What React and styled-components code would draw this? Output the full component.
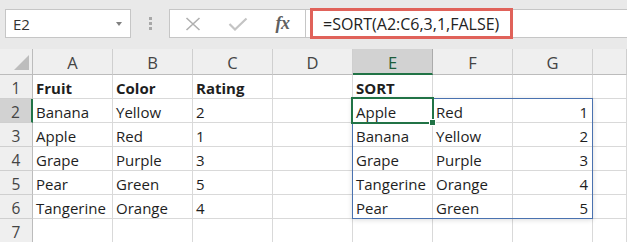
import React from 'react';
import styled, { createGlobalStyle } from 'styled-components';

const GlobalStyle = createGlobalStyle`
  html, body {
    margin: 0;
    padding: 0;
    background: #fff;
  }
  body {
    font-family: "Open Sans", "Liberation Sans", sans-serif;
    overflow: hidden;
  }
`;

const Window = styled.div`
  width: 627px;
  height: 242px;
  overflow: hidden;
  background: #fff;
`;

const FormulaBar = styled.div`
  display: flex;
  align-items: flex-start;
  height: 49px;
  box-sizing: border-box;
  padding-top: 9px;
  background: #e9e9e9;
`;

const NameBox = styled.div`
  width: 126px;
  height: 29px;
  margin-left: 5px;
  box-sizing: border-box;
  border: 1px solid #c6c6c6;
  background: #fff;
  display: flex;
  align-items: center;
  justify-content: space-between;
  padding: 0 8px 0 7px;
  font-size: 15px;
  color: #333;
`;

const Caret = styled.span`
  width: 0;
  height: 0;
  border-left: 3.5px solid transparent;
  border-right: 3.5px solid transparent;
  border-top: 4px solid #808080;
`;

const Grip = styled.div`
  width: 38px;
  height: 29px;
  display: flex;
  flex-direction: column;
  align-items: center;
  justify-content: center;
  gap: 2px;

  span {
    width: 3px;
    height: 3px;
    background: #a8a8a8;
  }
`;

const FxBox = styled.div`
  width: 137px;
  height: 29px;
  box-sizing: border-box;
  border: 1px solid #c6c6c6;
  background: #fff;
  display: flex;
  align-items: center;
`;

const IconSlot = styled.div`
  width: 45px;
  display: flex;
  justify-content: center;
  align-items: center;
  color: ${p => p.$color || '#b0b0b0'};
`;

const FxLabel = styled.span`
  font-family: "Liberation Serif", "DejaVu Serif", serif;
  font-style: italic;
  font-weight: bold;
  font-size: 18px;
  color: #606060;
  letter-spacing: -0.5px;
`;

const FormulaInput = styled.div`
  flex: 1;
  height: 29px;
  box-sizing: border-box;
  border-top: 1px solid #c6c6c6;
  border-bottom: 1px solid #c6c6c6;
  background: #fff;
  display: flex;
  align-items: center;
`;

const Highlight = styled.div`
  flex-shrink: 0;
  width: 203px;
  height: 31px;
  margin-left: 4px;
  box-sizing: border-box;
  border: 3px solid #e0625a;
  padding-left: 10px;
  display: flex;
  align-items: center;
  font-size: 16px;
  color: #222;
`;

const Grid = styled.div`
  display: grid;
  grid-template-columns: 33px repeat(7, 80px) 1fr;
  grid-template-rows: 26px repeat(7, 24px);
`;

const Placed = styled.div`
  grid-row: ${p => p.$r};
  grid-column: ${p => p.$c};
  box-sizing: border-box;
  min-width: 0;
`;

const Corner = styled(Placed)`
  background: #efefef;
  border-right: 1px solid #bcbcbc;
  border-bottom: 1px solid #bcbcbc;
  display: flex;
  justify-content: flex-end;
  align-items: flex-end;
  padding: 0 3px 4px 0;

  &::after {
    content: '';
    width: 0;
    height: 0;
    border-left: 15px solid transparent;
    border-bottom: 15px solid #bdbdbd;
  }
`;

const ColHead = styled(Placed)`
  background: ${p => (p.$sel ? '#d2d2d2' : '#efefef')};
  border-right: 1px solid ${p => (p.$sel ? '#ababab' : '#cfcfcf')};
  border-bottom: ${p => (p.$sel ? '2px solid #217346' : '1px solid #bcbcbc')};
  color: ${p => (p.$sel ? '#1d5c3a' : '#444')};
  display: flex;
  justify-content: center;
  align-items: flex-end;
  padding-bottom: ${p => (p.$sel ? 0 : 1)}px;
  font-size: 16.5px;
  line-height: 20px;
`;

const RowHead = styled(Placed)`
  background: ${p => (p.$sel ? '#d2d2d2' : '#efefef')};
  border-right: ${p => (p.$sel ? '2px solid #217346' : '1px solid #bcbcbc')};
  border-bottom: 1px solid #cfcfcf;
  color: #444;
  display: flex;
  justify-content: center;
  align-items: flex-end;
  padding-bottom: 1px;
  font-size: 15.5px;
  line-height: 18px;
`;

const Cell = styled(Placed)`
  border-right: 1px solid #d9d9d9;
  border-bottom: 1px solid #d9d9d9;
  display: flex;
  align-items: flex-end;
  justify-content: ${p => (p.$right ? 'flex-end' : 'flex-start')};
  padding: 0 4px 1px 3px;
  font-size: 15px;
  line-height: 18px;
  font-weight: ${p => (p.$bold ? 700 : 400)};
  color: #1e1e1e;
  white-space: nowrap;
`;

const SpillRange = styled(Placed)`
  position: relative;
  z-index: 1;
  margin: -1px 0 0 -1px;
  border: 1px solid #4a72b0;
  box-shadow: 0 1px 5px rgba(0, 0, 0, 0.14);
  pointer-events: none;
`;

const ActiveCell = styled(Placed)`
  position: relative;
  z-index: 2;
  margin: -2px -1px -1px -2px;
  border: 2px solid #217346;
  pointer-events: none;

  &::after {
    content: '';
    position: absolute;
    right: -4px;
    bottom: -4px;
    width: 5px;
    height: 5px;
    background: #217346;
    border: 1px solid #fff;
  }
`;

const columns = ['A', 'B', 'C', 'D', 'E', 'F', 'G', ''];

const rows = [
  ['Fruit', 'Color', 'Rating', '', 'SORT', '', ''],
  ['Banana', 'Yellow', '2', '', 'Apple', 'Red', 1],
  ['Apple', 'Red', '1', '', 'Banana', 'Yellow', 2],
  ['Grape', 'Purple', '3', '', 'Grape', 'Purple', 3],
  ['Pear', 'Green', '5', '', 'Tangerine', 'Orange', 4],
  ['Tangerine', 'Orange', '4', '', 'Pear', 'Green', 5],
  ['', '', '', '', '', '', ''],
];

const CancelIcon = () => (
  <svg width="16" height="14" viewBox="0 0 16 14">
    <path d="M1.5 1 L14.5 13 M14.5 1 L1.5 13" stroke="currentColor" strokeWidth="1.6" fill="none" />
  </svg>
);

const CheckIcon = () => (
  <svg width="20" height="14" viewBox="0 0 20 14">
    <path d="M1.5 7 L7 12.5 L18.5 1.5" stroke="currentColor" strokeWidth="2.2" fill="none" />
  </svg>
);

export default function App() {
  return (
    <Window>
      <GlobalStyle />
      <FormulaBar>
        <NameBox>
          <span>E2</span>
          <Caret />
        </NameBox>
        <Grip>
          <span />
          <span />
          <span />
        </Grip>
        <FxBox>
          <IconSlot>
            <CancelIcon />
          </IconSlot>
          <IconSlot $color="#c4c4c4">
            <CheckIcon />
          </IconSlot>
          <IconSlot>
            <FxLabel>fx</FxLabel>
          </IconSlot>
        </FxBox>
        <FormulaInput>
          <Highlight>=SORT(A2:C6,3,1,FALSE)</Highlight>
        </FormulaInput>
      </FormulaBar>

      <Grid>
        <Corner $r={1} $c={1} />
        {columns.map((col, i) => (
          <ColHead key={i} $r={1} $c={i + 2} $sel={col === 'E'}>
            {col}
          </ColHead>
        ))}
        {rows.map((row, ri) => (
          <React.Fragment key={ri}>
            <RowHead $r={ri + 2} $c={1} $sel={ri === 1}>
              {ri + 1}
            </RowHead>
            {row.map((val, ci) => (
              <Cell
                key={ci}
                $r={ri + 2}
                $c={ci + 2}
                $bold={ri === 0}
                $right={typeof val === 'number'}
              >
                {val}
              </Cell>
            ))}
            <Cell $r={ri + 2} $c={9} />
          </React.Fragment>
        ))}
        <SpillRange $r="3 / 8" $c="6 / 9" />
        <ActiveCell $r="3 / 4" $c="6 / 7" />
      </Grid>
    </Window>
  );
}
